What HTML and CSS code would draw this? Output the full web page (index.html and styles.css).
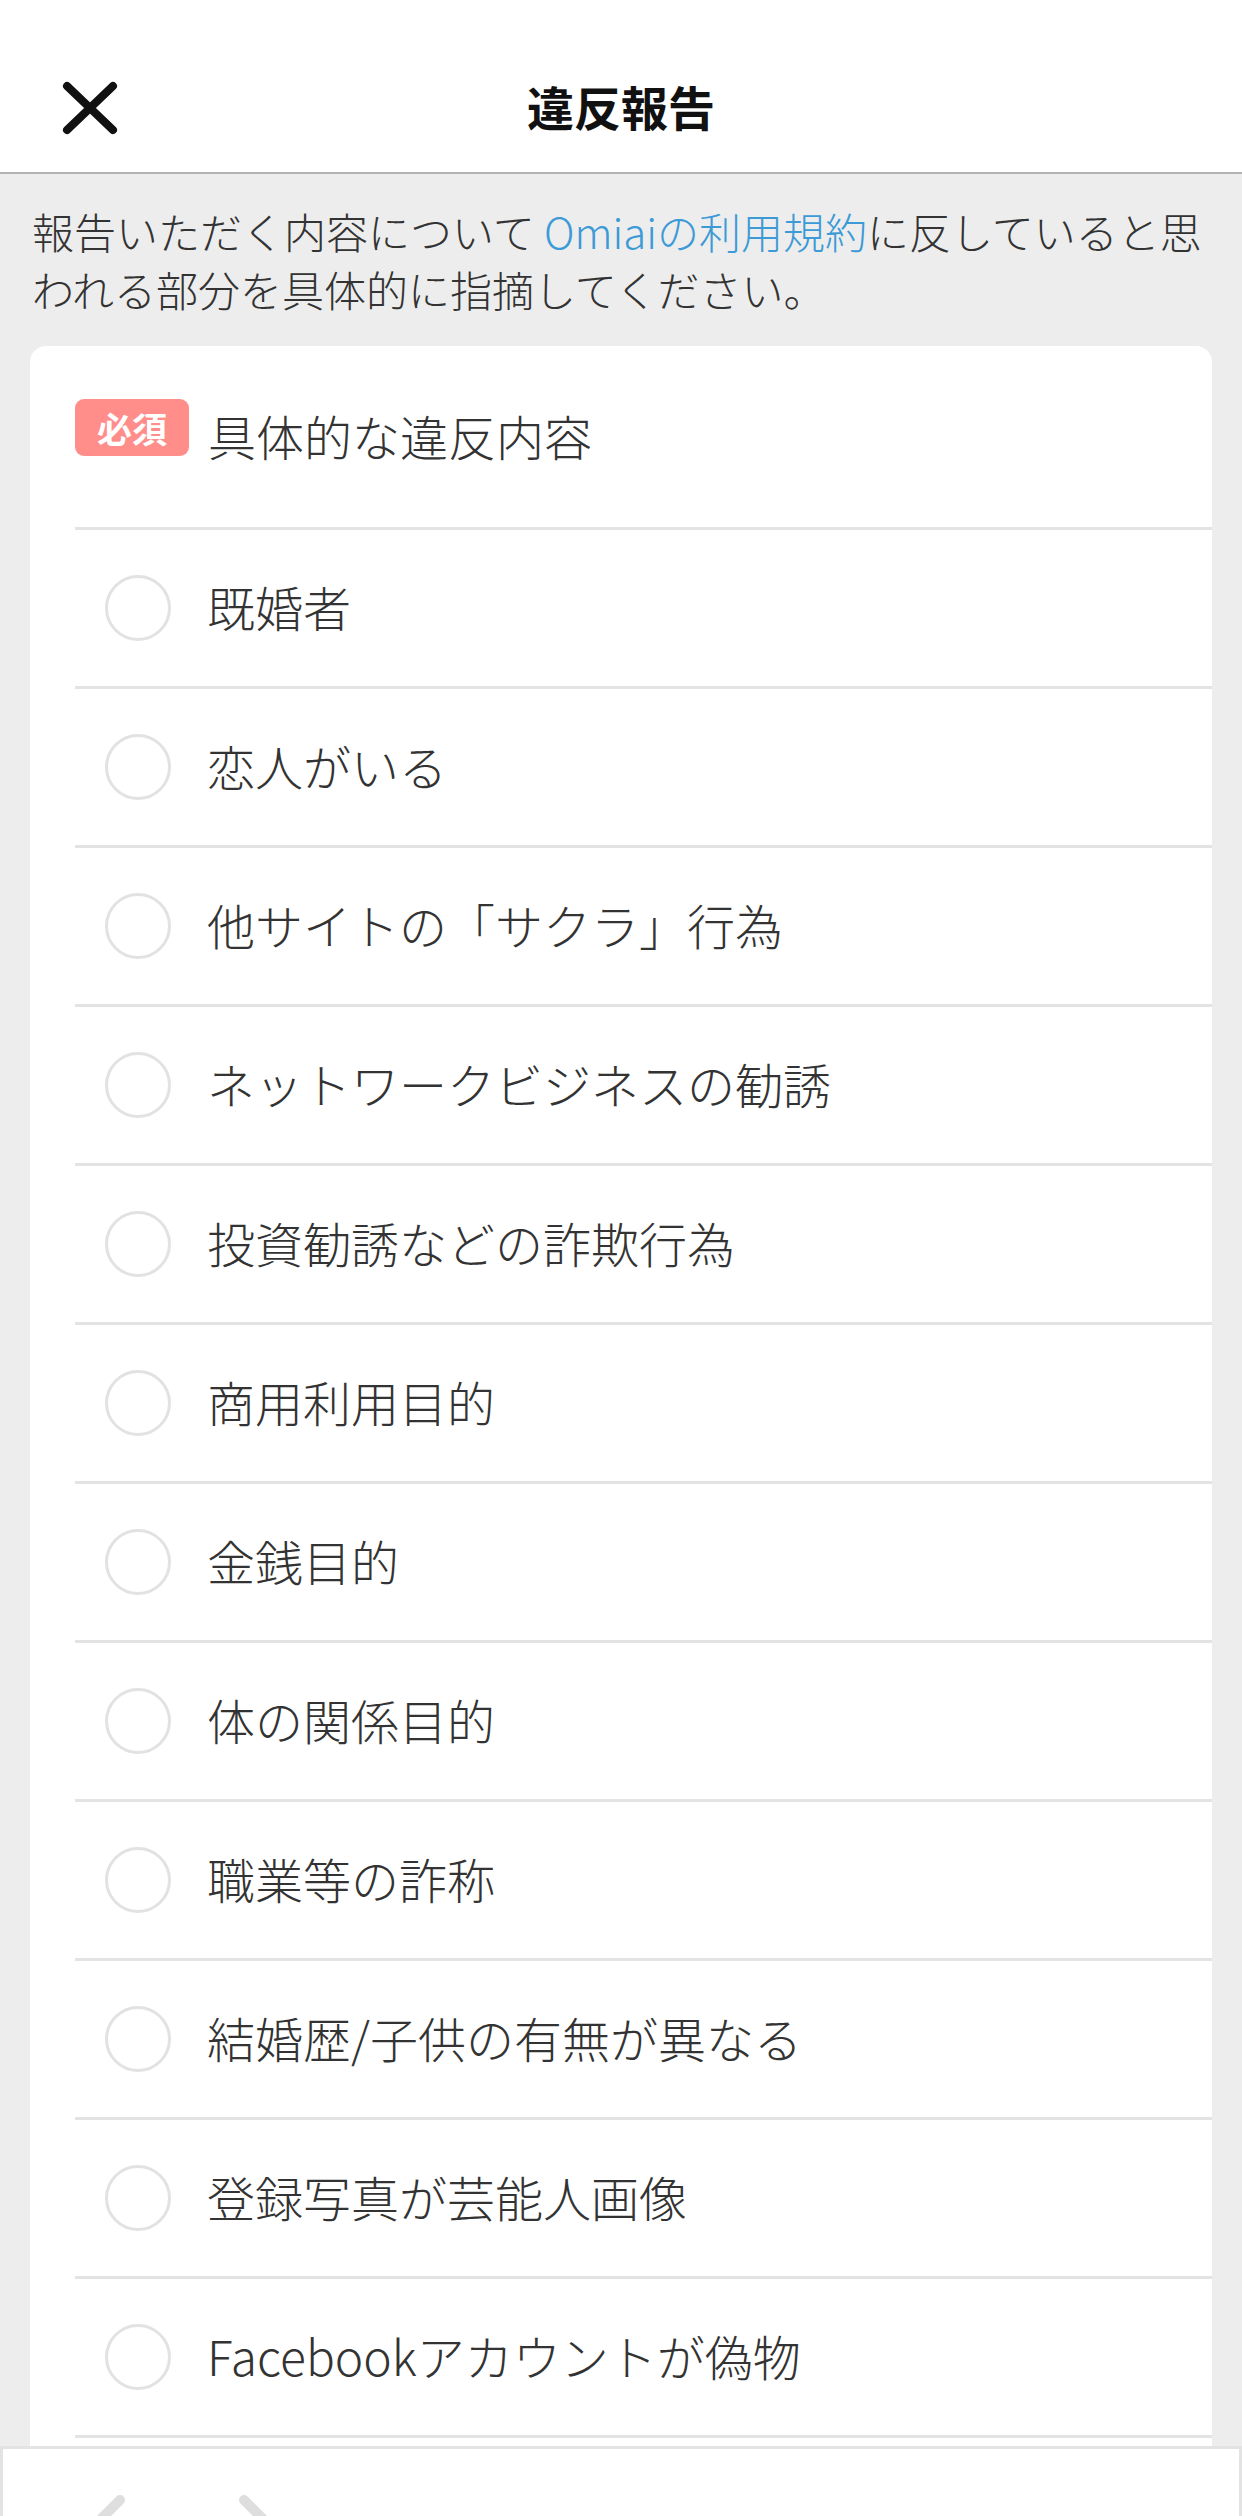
FILE: index.html
```html
<!DOCTYPE html>
<html lang="ja">
<head>
<meta charset="utf-8">
<title>違反報告</title>
<link rel="stylesheet" href="styles.css">
</head>
<body>
<div class="screen">
  <header class="topbar">
    <button class="close" aria-label="閉じる">
      <svg viewBox="0 0 56 56" width="56" height="56"><path d="M5 6 L51 50 M5 50 L51 6" stroke="#111" stroke-width="8" stroke-linecap="round" fill="none"/></svg>
    </button>
    <h1 class="title">違反報告</h1>
    <span class="spacer"></span>
  </header>
  <main class="content">
    <p class="lead">報告いただく内容について <a class="link" href="#">Omiaiの利用規約</a>に反していると思<br>われる部分を具体的に指摘してください。</p>
    <section class="card">
      <div class="card-head">
        <span class="badge">必須</span>
        <span class="card-title">具体的な違反内容</span>
      </div>
      <ul class="options">
        <li class="option"><span class="radio"></span><span class="label">既婚者</span></li>
        <li class="option"><span class="radio"></span><span class="label">恋人がいる</span></li>
        <li class="option"><span class="radio"></span><span class="label">他サイトの「サクラ」行為</span></li>
        <li class="option"><span class="radio"></span><span class="label">ネットワークビジネスの勧誘</span></li>
        <li class="option"><span class="radio"></span><span class="label">投資勧誘などの詐欺行為</span></li>
        <li class="option"><span class="radio"></span><span class="label">商用利用目的</span></li>
        <li class="option"><span class="radio"></span><span class="label">金銭目的</span></li>
        <li class="option"><span class="radio"></span><span class="label">体の関係目的</span></li>
        <li class="option"><span class="radio"></span><span class="label">職業等の詐称</span></li>
        <li class="option"><span class="radio"></span><span class="label">結婚歴/子供の有無が異なる</span></li>
        <li class="option"><span class="radio"></span><span class="label">登録写真が芸能人画像</span></li>
        <li class="option"><span class="radio"></span><span class="label">Facebookアカウントが偽物</span></li>
      </ul>
    </section>
  </main>
  <footer class="toolbar">
    <svg class="nav nav-back" viewBox="0 0 44 67" width="44" height="67"><path d="M32 51 L6 77 L32 103" stroke="#dedede" stroke-width="10" stroke-linecap="round" stroke-linejoin="round" fill="none"/></svg>
    <svg class="nav nav-fwd" viewBox="0 0 50 67" width="50" height="67"><path d="M18 51 L44 77 L18 103" stroke="#dedede" stroke-width="10" stroke-linecap="round" stroke-linejoin="round" fill="none"/></svg>
  </footer>
</div>
</body>
</html>
```

FILE: styles.css
```css
* { box-sizing: border-box; }
html, body { margin: 0; padding: 0; }
body {
  width: 1242px;
  height: 2516px;
  overflow: hidden;
  font-family: "Noto Sans CJK JP", "Noto Sans", sans-serif;
  font-weight: 300;
  color: #333;
  background: #ededed;
}
.screen {
  display: flex;
  flex-direction: column;
  height: 2516px;
}
.topbar {
  flex: 0 0 auto;
  height: 174px;
  padding-top: 40px;
  background: #fff;
  border-bottom: 2px solid #b3b3b3;
  display: grid;
  grid-template-columns: 1fr auto 1fr;
  align-items: center;
}
.close {
  justify-self: start;
  margin-left: 62px;
  margin-top: 3px;
  width: 56px;
  height: 56px;
  padding: 0;
  border: 0;
  background: none;
  display: flex;
}
.title {
  margin: 0;
  font-size: 47px;
  font-weight: 700;
  color: #111;
  line-height: 60px;
}
.content {
  flex: 1 1 auto;
  overflow: hidden;
  background: #ededed;
}
.lead {
  margin: 0;
  padding: 28px 20px 0 32px;
  font-size: 42px;
  line-height: 58px;
  color: #333;
}
.link {
  color: #3c9ad6;
  text-decoration: none;
}
.card {
  margin: 28px 30px 0;
  background: #fff;
  border-radius: 16px;
  padding-left: 45px;
  padding-bottom: 200px;
}
.card-head {
  height: 181px;
  padding-top: 53px;
  display: flex;
  align-items: flex-start;
}
.badge {
  width: 114px;
  height: 57px;
  border-radius: 9px;
  background: #ff8e8b;
  color: #fff;
  font-size: 35px;
  font-weight: 700;
  display: flex;
  align-items: center;
  justify-content: center;
  line-height: 1;
}
.card-title {
  margin-left: 19px;
  margin-top: 4px;
  font-size: 48px;
  line-height: 64px;
  color: #333;
}
.options {
  list-style: none;
  margin: 0;
  padding: 0;
  border-bottom: 3px solid #e3e3e3;
}
.option {
  height: 159px;
  border-top: 3px solid #e3e3e3;
  padding-left: 30px;
  display: flex;
  align-items: center;
  gap: 36px;
}
.radio {
  flex: 0 0 auto;
  width: 66px;
  height: 66px;
  border: 3px solid #e2e2e2;
  border-radius: 50%;
}
.label {
  font-size: 48px;
  line-height: 64px;
  margin-top: -4px;
  color: #333;
}
.toolbar {
  flex: 0 0 70px;
  height: 70px;
  background: #fff;
  border: 3px solid #e3e3e3;
  border-bottom: 0;
  display: flex;
  align-items: flex-start;
  padding-left: 85px;
  overflow: hidden;
}
.nav { display: block; flex: 0 0 auto; }
.nav-fwd { margin-left: 94px; }
```
